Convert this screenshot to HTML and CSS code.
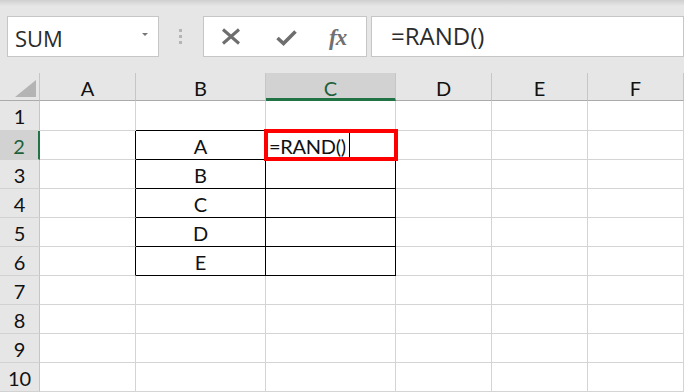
FILE: index.html
```html
<!DOCTYPE html>
<html lang="en">
<head>
    <meta charset="UTF-8">
    <title>Sheet</title>
    <link rel="stylesheet" href="styles.css">
</head>
<body>
    <div class="toolbar">
        <div class="name-box">
            <span class="name-text">SUM</span>
            <span class="arrow"></span>
        </div>
        <div class="grip">
            <span></span><span></span><span></span>
        </div>
        <div class="fx-buttons">
            <svg class="icon" width="20" height="17" viewBox="0 0 20 17">
                <path d="M2 1.5 L18 15.5 M18 1.5 L2 15.5" stroke="#6e6e6e" stroke-width="3" fill="none"/>
            </svg>
            <svg class="icon" width="21" height="16" viewBox="0 0 21 16">
                <path d="M1.5 8 L7.5 13.5 L19.5 1.5" stroke="#6e6e6e" stroke-width="3.6" fill="none"/>
            </svg>
            <span class="fx">fx</span>
        </div>
        <div class="formula-input">=RAND()</div>
    </div>

    <div class="sheet">
        <!-- column headers -->
        <div class="corner"><span class="tri"></span></div>
        <div class="ch">A</div>
        <div class="ch">B</div>
        <div class="ch sel">C</div>
        <div class="ch">D</div>
        <div class="ch">E</div>
        <div class="ch">F</div>

        <div class="rh">1</div>
        <div class="c"></div>
        <div class="c b-bottom"></div>
        <div class="c b-bottom"></div>
        <div class="c"></div><div class="c"></div><div class="c"></div>

        <div class="rh sel">2</div>
        <div class="c b-right"></div>
        <div class="c tb">A</div>
        <div class="c tb active">
            <span class="cell-text">=RAND()</span><span class="caret"></span>
            <span class="red-box"></span>
        </div>
        <div class="c"></div><div class="c"></div><div class="c"></div>

        <div class="rh">3</div>
        <div class="c b-right"></div>
        <div class="c tb">B</div>
        <div class="c tb"></div>
        <div class="c"></div><div class="c"></div><div class="c"></div>

        <div class="rh">4</div>
        <div class="c b-right"></div>
        <div class="c tb">C</div>
        <div class="c tb"></div>
        <div class="c"></div><div class="c"></div><div class="c"></div>

        <div class="rh">5</div>
        <div class="c b-right"></div>
        <div class="c tb">D</div>
        <div class="c tb"></div>
        <div class="c"></div><div class="c"></div><div class="c"></div>

        <div class="rh">6</div>
        <div class="c b-right"></div>
        <div class="c tb">E</div>
        <div class="c tb"></div>
        <div class="c"></div><div class="c"></div><div class="c"></div>

        <div class="rh">7</div>
        <div class="c"></div><div class="c"></div><div class="c"></div>
        <div class="c"></div><div class="c"></div><div class="c"></div>

        <div class="rh">8</div>
        <div class="c"></div><div class="c"></div><div class="c"></div>
        <div class="c"></div><div class="c"></div><div class="c"></div>

        <div class="rh">9</div>
        <div class="c"></div><div class="c"></div><div class="c"></div>
        <div class="c"></div><div class="c"></div><div class="c"></div>

        <div class="rh">10</div>
        <div class="c"></div><div class="c"></div><div class="c"></div>
        <div class="c"></div><div class="c"></div><div class="c"></div>
    </div>
</body>
</html>
```

FILE: styles.css
```css
* {
    box-sizing: border-box;
}
body {
    margin: 0;
    padding: 0;
    background-color: #e6e6e6;
    font-family: "Open Sans", sans-serif;
    overflow: hidden;
}
.toolbar {
    height: 73px;
    display: flex;
    align-items: flex-start;
    padding: 16px 0 0 7px;
    background: linear-gradient(#cfcfcf 0px, #e6e6e6 6px);
}
.name-box {
    width: 152px;
    height: 41px;
    display: flex;
    align-items: center;
    justify-content: space-between;
    padding: 3px 10px 0 7px;
    background-color: #fff;
    border: 1px solid #c6c6c6;
}
.name-text {
    font-size: 22px;
    color: #2b2b2b;
    line-height: 1;
}
.arrow {
    width: 0;
    height: 0;
    margin-top: -7px;
    border-left: 3px solid transparent;
    border-right: 3px solid transparent;
    border-top: 3px solid #777;
}
.grip {
    display: flex;
    flex-direction: column;
    gap: 3px;
    margin: 13px 21px 0 20px;
}
.grip span {
    width: 3px;
    height: 3px;
    background-color: #b5b5b5;
}
.fx-buttons {
    width: 164px;
    height: 41px;
    display: flex;
    align-items: center;
    padding-left: 17px;
    background-color: #fff;
    border: 1px solid #c6c6c6;
}
.fx-buttons .icon {
    display: block;
}
.fx-buttons .icon:first-child {
    margin-right: 35px;
}
.fx-buttons .icon:nth-child(2) {
    margin-top: 2px;
    margin-right: 32px;
}
.fx {
    font-family: "Liberation Serif", serif;
    font-style: italic;
    font-weight: bold;
    font-size: 23px;
    color: #707070;
    margin-top: 2px;
    letter-spacing: -1px;
}
.formula-input {
    flex: 1;
    height: 41px;
    margin-left: 4px;
    padding: 0 0 3px 19px;
    display: flex;
    align-items: center;
    font-size: 24px;
    color: #2b2b2b;
    background-color: #fff;
    border: 1px solid #c6c6c6;
}

.sheet {
    display: grid;
    grid-template-columns: 40px 96px 130px 130px 96px 96px 96px;
    grid-template-rows: 28px 30px repeat(9, 29px);
    font-family: "Lato", sans-serif;
    font-size: 20px;
    color: #111;
    background-color: #fff;
}
.corner {
    position: relative;
    background-color: #e6e6e6;
    border-right: 1px solid #c6c6c6;
    border-bottom: 1px solid #ababab;
}
.tri {
    position: absolute;
    right: 3px;
    bottom: 3px;
    width: 0;
    height: 0;
    border-left: 21px solid transparent;
    border-bottom: 17px solid #b4b4b4;
}
.ch {
    display: flex;
    align-items: center;
    justify-content: center;
    padding-top: 2px;
    background-color: #e6e6e6;
    border-right: 1px solid #c6c6c6;
    border-bottom: 1px solid #ababab;
}
.ch.sel {
    background-color: #d2d2d2;
    border-bottom: 3px solid #217346;
    color: #1f5f3c;
    padding-top: 4px;
}
.rh {
    display: flex;
    align-items: center;
    justify-content: center;
    padding-top: 1px;
    background-color: #e6e6e6;
    border-right: 1px solid #c6c6c6;
    border-bottom: 1px solid #d2d2d2;
}
.rh.sel {
    background-color: #d2d2d2;
    border-right: 2px solid #217346;
    color: #1f5f3c;
}
.c {
    border-right: 1px solid #d4d4d4;
    border-bottom: 1px solid #d4d4d4;
}
.c.b-bottom {
    border-bottom-color: #000;
}
.c.b-right {
    border-right-color: #000;
}
.c.tb {
    display: flex;
    align-items: center;
    justify-content: center;
    padding-top: 1px;
    border-right-color: #000;
    border-bottom-color: #000;
}
.c.active {
    position: relative;
    justify-content: flex-start;
    padding-left: 3px;
}
.cell-text {
    letter-spacing: -0.3px;
}
.caret {
    display: inline-block;
    width: 1px;
    height: 25px;
    margin-left: 3px;
    background-color: #000;
}
.red-box {
    position: absolute;
    left: -2px;
    top: -2px;
    width: 134px;
    height: 32px;
    border: 4px solid #f00;
}
```
